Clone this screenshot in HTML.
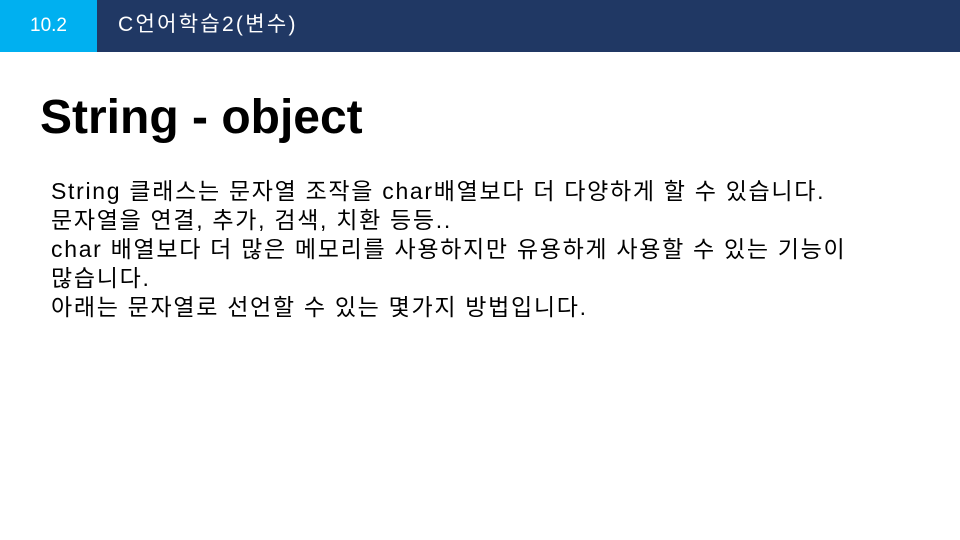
<!DOCTYPE html>
<html><head><meta charset="utf-8"><style>
body{margin:0;width:960px;height:540px;background:#fff;position:relative;overflow:hidden;font-family:"Liberation Sans","Noto Sans CJK KR",sans-serif}
.hb{position:absolute;left:0;top:0;width:97px;height:52px;background:#00b0f0;color:#fff;font-size:19px;line-height:52px;text-align:center}
.hd{position:absolute;left:97px;top:0;width:863px;height:52px;background:#203864;color:#fff;font-size:21px;letter-spacing:2.3px;line-height:50px;padding-left:21px;box-sizing:border-box}
h1{position:absolute;left:40px;top:88px;margin:0;font-size:48px;font-weight:bold;line-height:60px}
.b{position:absolute;left:51px;top:177px;font-size:23px;letter-spacing:1.7px;line-height:29px;color:#000;white-space:nowrap}
</style></head><body>
<div class="hb">10.2</div>
<div class="hd">C언어학습2(변수)</div>
<h1>String - object</h1>
<div class="b">String 클래스는 문자열 조작을 char배열보다 더 다양하게 할 수 있습니다.<br>문자열을 연결, 추가, 검색, 치환 등등..<br>char 배열보다 더 많은 메모리를 사용하지만 유용하게 사용할 수 있는 기능이<br>많습니다.<br>아래는 문자열로 선언할 수 있는 몇가지 방법입니다.</div>
</body></html>
